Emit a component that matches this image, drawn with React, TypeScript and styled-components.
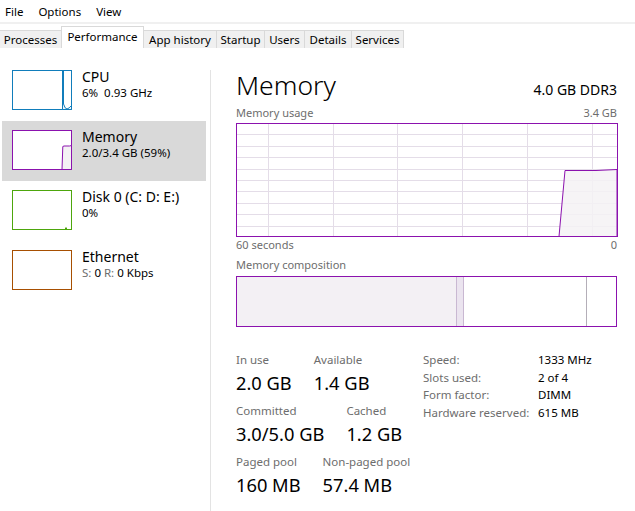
import React from 'react'
import styled, { createGlobalStyle } from 'styled-components'

const COLORS = {
  cpu: '#117dbb',
  cpuFill: '#f1f6fa',
  memory: '#8b12ae',
  memoryFill: '#f4f2f4',
  disk: '#4da60c',
  diskFill: '#eff7e9',
  ethernet: '#a74f01',
  label: '#6d6d6d',
  tabBorder: '#d9d9d9',
  tabBg: '#f0f0f0',
  selected: '#d9d9d9',
  grid: '#e4dde8',
  divider: '#e3e3e3',
}

const GlobalStyle = createGlobalStyle`
  html, body {
    margin: 0;
    height: 100%;
    background: #fff;
    overflow: hidden;
  }
  body {
    font-family: "Noto Sans", "Open Sans", sans-serif;
    color: #000;
  }
  #root {
    height: 100%;
  }
`

const Window = styled.div`
  display: flex;
  flex-direction: column;
  height: 100%;
`

const MenuBar = styled.div`
  display: flex;
  gap: 15px;
  box-sizing: border-box;
  height: 24px;
  padding: 3px 0 0 5px;
  border-bottom: 2px solid ${COLORS.tabBg};
  font-size: 11.5px;
  line-height: 18px;
`

const MenuItem = styled.span``

const TabStrip = styled.div`
  display: flex;
  align-items: flex-end;
  height: 22px;
  margin-top: 2px;
`

const Tab = styled.div<{ $active?: boolean; $width: number }>`
  box-sizing: border-box;
  width: ${(p) => p.$width}px;
  height: ${(p) => (p.$active ? 22 : 18)}px;
  padding-top: ${(p) => (p.$active ? 2 : 1)}px;
  text-align: center;
  font-size: 11.5px;
  line-height: 15px;
  background: ${(p) => (p.$active ? '#fff' : COLORS.tabBg)};
  border-top: 1px solid ${COLORS.tabBorder};
  border-right: 1px solid ${COLORS.tabBorder};
  border-left: ${(p) => (p.$active ? `1px solid ${COLORS.tabBorder}` : 'none')};
  margin-left: ${(p) => (p.$active ? -1 : 0)}px;
`

const Body = styled.div`
  flex: 1;
  display: flex;
  min-height: 0;
`

const Sidebar = styled.div`
  box-sizing: border-box;
  width: 210px;
  padding: 13px 4px 0 2px;
`

const Divider = styled.div`
  width: 1px;
  margin-top: 22px;
  background: ${COLORS.divider};
`

const Item = styled.div<{ $selected?: boolean }>`
  display: flex;
  height: 60px;
  padding-left: 10px;
  background: ${(p) => (p.$selected ? COLORS.selected : 'transparent')};
`

const ThumbBox = styled.svg`
  display: block;
  flex: none;
  margin-top: 9px;
`

const ItemText = styled.div`
  margin-left: 10px;
  padding-top: 7px;
`

const ItemTitle = styled.div`
  font-size: 14px;
  line-height: 17px;
`

const ItemSub = styled.div`
  font-size: 11.5px;
  line-height: 16px;
`

const Dim = styled.span`
  color: ${COLORS.label};
`

const Main = styled.div`
  flex: 1;
  min-width: 0;
  padding: 19px 18px 0 25px;
`

const Header = styled.div`
  display: flex;
  justify-content: space-between;
  align-items: baseline;
`

const Title = styled.div`
  font-size: 26.5px;
  line-height: 36px;
  font-weight: 300;
`

const Subtitle = styled.div`
  font-size: 14px;
`

const Caption = styled.div<{ $gap?: number }>`
  display: flex;
  justify-content: space-between;
  margin-top: ${(p) => p.$gap ?? 0}px;
  font-size: 11px;
  line-height: 15px;
  color: ${COLORS.label};
`

const Chart = styled.svg`
  display: block;
  margin-top: 3px;
`

const CompositionBar = styled.div`
  display: flex;
  box-sizing: border-box;
  height: 51px;
  margin-top: 4px;
  border: 1px solid ${COLORS.memory};
`

const Segment = styled.div<{ $width: number; $fill: string; $edge?: string }>`
  box-sizing: border-box;
  width: ${(p) => p.$width}px;
  flex: ${(p) => (p.$width ? 'none' : 1)};
  background: ${(p) => p.$fill};
  border-right: ${(p) => (p.$edge ? `1px solid ${p.$edge}` : 'none')};
`

const Stats = styled.div`
  display: flex;
  align-items: flex-start;
  margin-top: 25px;
`

const StatColumn = styled.div`
  width: 187px;
  display: flex;
  flex-direction: column;
  gap: 4px;
`

const StatRow = styled.div`
  display: flex;
  gap: 22px;
`

const StatLabel = styled.div`
  font-size: 11.5px;
  line-height: 15px;
  color: ${COLORS.label};
`

const StatValue = styled.div`
  font-size: 18.3px;
  line-height: 32px;
`

const Specs = styled.div`
  display: grid;
  grid-template-columns: 115px auto;
  align-content: start;
  margin-top: -1px;
  font-size: 11.5px;
  line-height: 17.7px;
`

const SpecLabel = styled.div`
  color: ${COLORS.label};
`

const tabs = [
  { name: 'Processes', width: 62 },
  { name: 'Performance', width: 83, active: true },
  { name: 'App history', width: 73 },
  { name: 'Startup', width: 48 },
  { name: 'Users', width: 40 },
  { name: 'Details', width: 47 },
  { name: 'Services', width: 52 },
]

type ThumbProps = { color: string; fill?: string; path?: string }

function Thumb({ color, fill, path }: ThumbProps) {
  return (
    <ThumbBox width={60} height={40} viewBox="0 0 60 40">
      <rect x={0.5} y={0.5} width={59} height={39} fill="#fff" stroke={color} />
      {path && <path d={path} fill={fill ?? 'none'} stroke={color} strokeWidth={1} />}
    </ThumbBox>
  )
}

const resources = [
  {
    title: 'CPU',
    sub: <>6%&nbsp;&nbsp;0.93 GHz</>,
    color: COLORS.cpu,
    fill: COLORS.cpuFill,
    path: 'M50.5 39.5 L50.5 1 L51.5 1 L51.5 34 Q53 39 55 39 Q57 38.5 59.5 35.5 L59.5 39.5 Z',
  },
  {
    title: 'Memory',
    sub: '2.0/3.4 GB (59%)',
    color: COLORS.memory,
    fill: COLORS.memoryFill,
    path: 'M50 39.5 L50.8 16.5 L52 16 L57.5 16 L59.5 15.5 L59.5 39.5 Z',
    selected: true,
  },
  {
    title: 'Disk 0 (C: D: E:)',
    sub: '0%',
    color: COLORS.disk,
    fill: COLORS.diskFill,
    path: 'M53 39.5 L54 37.5 L55 39.5 Z',
  },
  {
    title: 'Ethernet',
    sub: (
      <>
        <Dim>S:</Dim> 0 <Dim>R:</Dim> 0 Kbps
      </>
    ),
    color: COLORS.ethernet,
  },
]

const CHART_W = 382
const CHART_H = 114

function UsageChart() {
  const rows = Array.from({ length: 9 }, (_, i) => ((i + 1) * CHART_H) / 10)
  const cols = Array.from({ length: 6 }, (_, i) => 32 + i * 64.7)
  return (
    <Chart width={CHART_W} height={CHART_H} viewBox={`0 0 ${CHART_W} ${CHART_H}`}>
      {rows.map((y) => (
        <line key={`r${y}`} x1={1} x2={CHART_W - 1} y1={Math.round(y) + 0.5} y2={Math.round(y) + 0.5} stroke={COLORS.grid} />
      ))}
      {cols.map((x) => (
        <line key={`c${x}`} x1={Math.round(x) + 0.5} x2={Math.round(x) + 0.5} y1={1} y2={CHART_H - 1} stroke={COLORS.grid} />
      ))}
      <path
        d="M323 113.5 L329 47.5 L360 47.5 L381 46.5 L381 113.5 Z"
        fill={COLORS.memoryFill}
        fillOpacity={0.85}
        stroke={COLORS.memory}
      />
      <rect x={0.5} y={0.5} width={CHART_W - 1} height={CHART_H - 1} fill="none" stroke={COLORS.memory} />
    </Chart>
  )
}

const statRows = [
  [
    { label: 'In use', value: '2.0 GB' },
    { label: 'Available', value: '1.4 GB' },
  ],
  [
    { label: 'Committed', value: '3.0/5.0 GB' },
    { label: 'Cached', value: '1.2 GB' },
  ],
  [
    { label: 'Paged pool', value: '160 MB' },
    { label: 'Non-paged pool', value: '57.4 MB' },
  ],
]

const specs = [
  ['Speed:', '1333 MHz'],
  ['Slots used:', '2 of 4'],
  ['Form factor:', 'DIMM'],
  ['Hardware reserved:', '615 MB'],
]

export default function App() {
  return (
    <Window>
      <GlobalStyle />
      <MenuBar>
        <MenuItem>File</MenuItem>
        <MenuItem>Options</MenuItem>
        <MenuItem>View</MenuItem>
      </MenuBar>
      <TabStrip>
        {tabs.map((t) => (
          <Tab key={t.name} $active={t.active} $width={t.width}>
            {t.name}
          </Tab>
        ))}
      </TabStrip>
      <Body>
        <Sidebar>
          {resources.map((r) => (
            <Item key={r.title} $selected={r.selected}>
              <Thumb color={r.color} fill={r.fill} path={r.path} />
              <ItemText>
                <ItemTitle>{r.title}</ItemTitle>
                <ItemSub>{r.sub}</ItemSub>
              </ItemText>
            </Item>
          ))}
        </Sidebar>
        <Divider />
        <Main>
          <Header>
            <Title>Memory</Title>
            <Subtitle>4.0 GB DDR3</Subtitle>
          </Header>
          <Caption $gap={2}>
            <span>Memory usage</span>
            <span>3.4 GB</span>
          </Caption>
          <UsageChart />
          <Caption>
            <span>60 seconds</span>
            <span>0</span>
          </Caption>
          <Caption $gap={5}>
            <span>Memory composition</span>
          </Caption>
          <CompositionBar>
            <Segment $width={220} $fill="#f3f0f4" $edge="#c9b8d2" />
            <Segment $width={7} $fill="#ebe4ef" $edge="#c9b8d2" />
            <Segment $width={123} $fill="#fff" $edge="#b4aeb8" />
            <Segment $width={0} $fill="#fff" />
          </CompositionBar>
          <Stats>
            <StatColumn>
              {statRows.map((row, i) => (
                <StatRow key={i}>
                  {row.map((s) => (
                    <div key={s.label}>
                      <StatLabel>{s.label}</StatLabel>
                      <StatValue>{s.value}</StatValue>
                    </div>
                  ))}
                </StatRow>
              ))}
            </StatColumn>
            <Specs>
              {specs.map(([k, v]) => (
                <React.Fragment key={k}>
                  <SpecLabel>{k}</SpecLabel>
                  <div>{v}</div>
                </React.Fragment>
              ))}
            </Specs>
          </Stats>
        </Main>
      </Body>
    </Window>
  )
}
